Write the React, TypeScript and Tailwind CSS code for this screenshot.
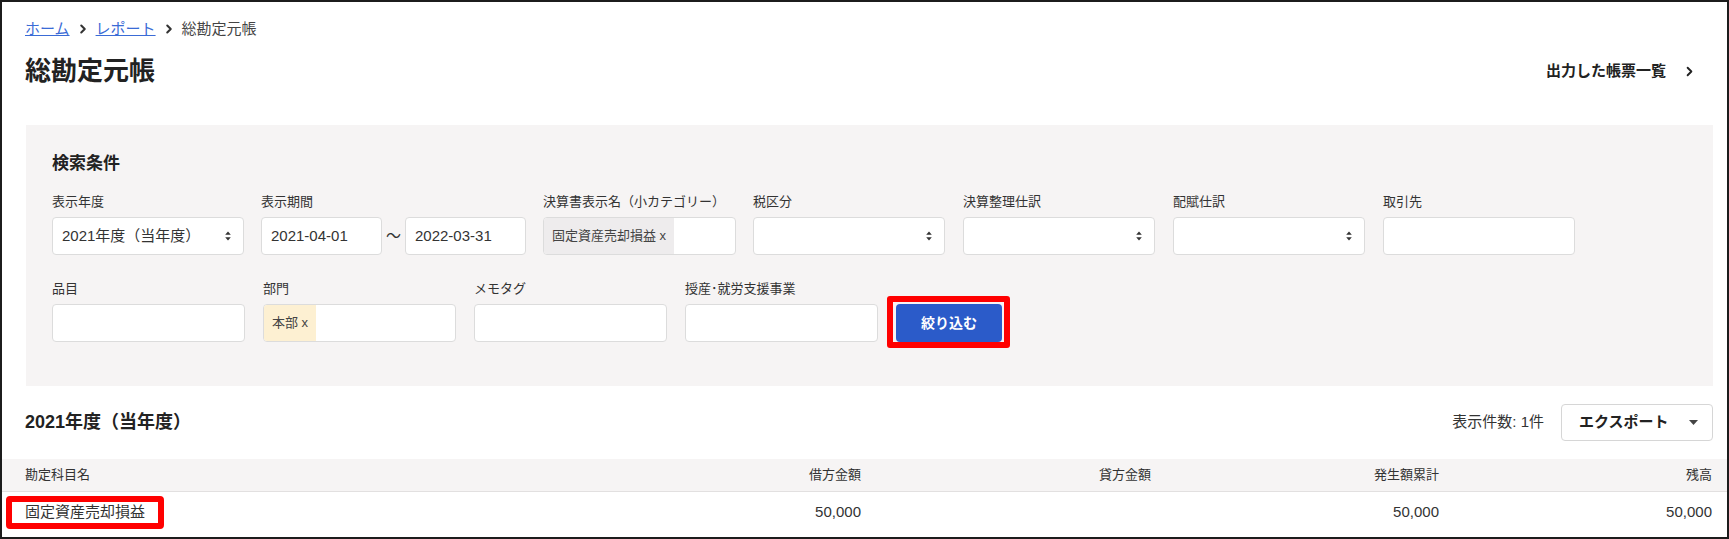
import { ChevronRight } from "lucide-react";

const SelectArrows = () => (
  <svg width="6" height="10" viewBox="0 0 6 10" className="shrink-0">
    <path d="M3 0.5 L5.8 3.8 L0.2 3.8 Z" fill="#333" />
    <path d="M3 9.5 L5.8 6.2 L0.2 6.2 Z" fill="#333" />
  </svg>
);

const Select = ({ value = "", w = "w-[192px]" }: { value?: string; w?: string }) => (
  <div
    className={`${w} h-[38px] bg-white border border-[#dcdcdc] rounded-[4px] flex items-center justify-between pl-[9px] pr-[12px] text-[15px]`}
  >
    <span>{value}</span>
    <SelectArrows />
  </div>
);

const Input = ({ value = "", w = "w-[192px]" }: { value?: string; w?: string }) => (
  <div
    className={`${w} h-[38px] bg-white border border-[#dcdcdc] rounded-[4px] flex items-center px-[9px] text-[15px]`}
  >
    {value}
  </div>
);

const TagInput = ({ tag, tagBg, w }: { tag: string; tagBg: string; w: string }) => (
  <div className={`${w} h-[38px] bg-white border border-[#dcdcdc] rounded-[4px] flex overflow-hidden`}>
    <span className={`${tagBg} h-full flex items-center px-[8px] text-[13px] text-[#444]`}>{tag}</span>
  </div>
);

const Field = ({ label, children }: { label: string; children: React.ReactNode }) => (
  <div className="flex flex-col">
    <span className="text-[13px] leading-[18px] mb-[6px] text-[#333]">{label}</span>
    {children}
  </div>
);

const columns = [
  { name: "借方金額", value: "50,000" },
  { name: "貸方金額", value: "" },
  { name: "発生額累計", value: "50,000" },
  { name: "残高", value: "50,000" },
];

export default function App() {
  return (
    <div className="w-[1729px] h-[539px] border-2 border-[#1c1c1c] bg-white overflow-hidden text-[#333] font-[family-name:'Liberation_Sans','Noto_Sans_CJK_JP',sans-serif]">
      <div className="pl-[23px] pr-[30px] pt-[17px]">
        <div className="flex items-center gap-[6px] text-[15px] leading-[20px]">
          <a className="text-[#3a6bd6] underline">ホーム</a>
          <ChevronRight size={14} strokeWidth={3.5} className="text-[#333]" />
          <a className="text-[#3a6bd6] underline">レポート</a>
          <ChevronRight size={14} strokeWidth={3.5} className="text-[#333]" />
          <span className="text-[#444]">総勘定元帳</span>
        </div>
        <div className="mt-[15px] h-[34px] flex items-center justify-between">
          <h1 className="text-[26px] leading-[34px] font-bold text-[#222]">総勘定元帳</h1>
          <div className="flex items-center gap-[16px] text-[15px] font-bold text-[#222]">
            出力した帳票一覧
            <ChevronRight size={15} strokeWidth={3} />
          </div>
        </div>
      </div>

      <div className="mt-[37px] ml-[24px] mr-[14px] bg-[#f6f4f4] pl-[26px] pt-[27px] pb-[44px]">
        <div className="text-[17px] leading-[24px] font-bold text-[#222]">検索条件</div>
        <div className="mt-[17px] flex gap-[17px]">
          <Field label="表示年度">
            <Select value="2021年度（当年度）" />
          </Field>
          <Field label="表示期間">
            <div className="flex items-center">
              <Input value="2021-04-01" w="w-[121px]" />
              <span className="w-[23px] text-center text-[15px]">〜</span>
              <Input value="2022-03-31" w="w-[121px]" />
            </div>
          </Field>
          <Field label="決算書表示名（小カテゴリー）">
            <TagInput tag="固定資産売却損益 x" tagBg="bg-[#eeeced]" w="w-[193px]" />
          </Field>
          <div className="flex gap-[18px]">
            <Field label="税区分">
              <Select />
            </Field>
            <Field label="決算整理仕訳">
              <Select />
            </Field>
            <Field label="配賦仕訳">
              <Select />
            </Field>
            <Field label="取引先">
              <Input />
            </Field>
          </div>
        </div>
        <div className="mt-[25px] flex items-end gap-[18px]">
          <Field label="品目">
            <Input w="w-[193px]" />
          </Field>
          <Field label="部門">
            <TagInput tag="本部 x" tagBg="bg-[#fdf0d2]" w="w-[193px]" />
          </Field>
          <Field label="メモタグ">
            <Input w="w-[193px]" />
          </Field>
          <Field label="授産･就労支援事業">
            <Input w="w-[193px]" />
          </Field>
          <div className="relative">
            <button className="w-[106px] h-[38px] rounded-[4px] bg-[#2b5bc9] text-white text-[14px] font-bold">
              絞り込む
            </button>
            <div className="absolute -left-[9px] -right-[8px] -top-[8px] -bottom-[6px] border-[6px] border-[#ff0000] rounded-[3px]" />
          </div>
        </div>
      </div>

      <div className="mt-[18px] h-[37px] flex items-center justify-between pl-[23px] pr-[14px]">
        <div className="text-[18px] font-bold text-[#222]">2021年度（当年度）</div>
        <div className="flex items-center gap-[17px]">
          <span className="text-[15px]">表示件数: 1件</span>
          <div className="w-[152px] h-[37px] border border-[#d6d6d6] rounded-[4px] bg-white flex items-center justify-between pl-[17px] pr-[14px]">
            <span className="text-[15px] font-bold text-[#222]">エクスポート</span>
            <svg width="9" height="5" viewBox="0 0 9 5">
              <path d="M0 0 L9 0 L4.5 5 Z" fill="#444" />
            </svg>
          </div>
        </div>
      </div>

      <div className="mt-[18px]">
        <div className="h-[33px] bg-[#f6f4f4] border-b border-[#e2e0e0] grid grid-cols-[546px_290px_290px_288px_273px] pl-[23px] items-center text-[13px]">
          <span>勘定科目名</span>
          {columns.map((c) => (
            <span key={c.name} className="text-right">
              {c.name}
            </span>
          ))}
        </div>
        <div className="relative h-[40px] grid grid-cols-[546px_290px_290px_288px_273px] pl-[23px] items-center text-[15px]">
          <span>固定資産売却損益</span>
          {columns.map((c) => (
            <span key={c.name} className="text-right">
              {c.value}
            </span>
          ))}
          <div className="absolute left-[4px] top-[4px] w-[158px] h-[33px] border-[6px] border-[#ff0000] rounded-[4px]" />
        </div>
      </div>
    </div>
  );
}
